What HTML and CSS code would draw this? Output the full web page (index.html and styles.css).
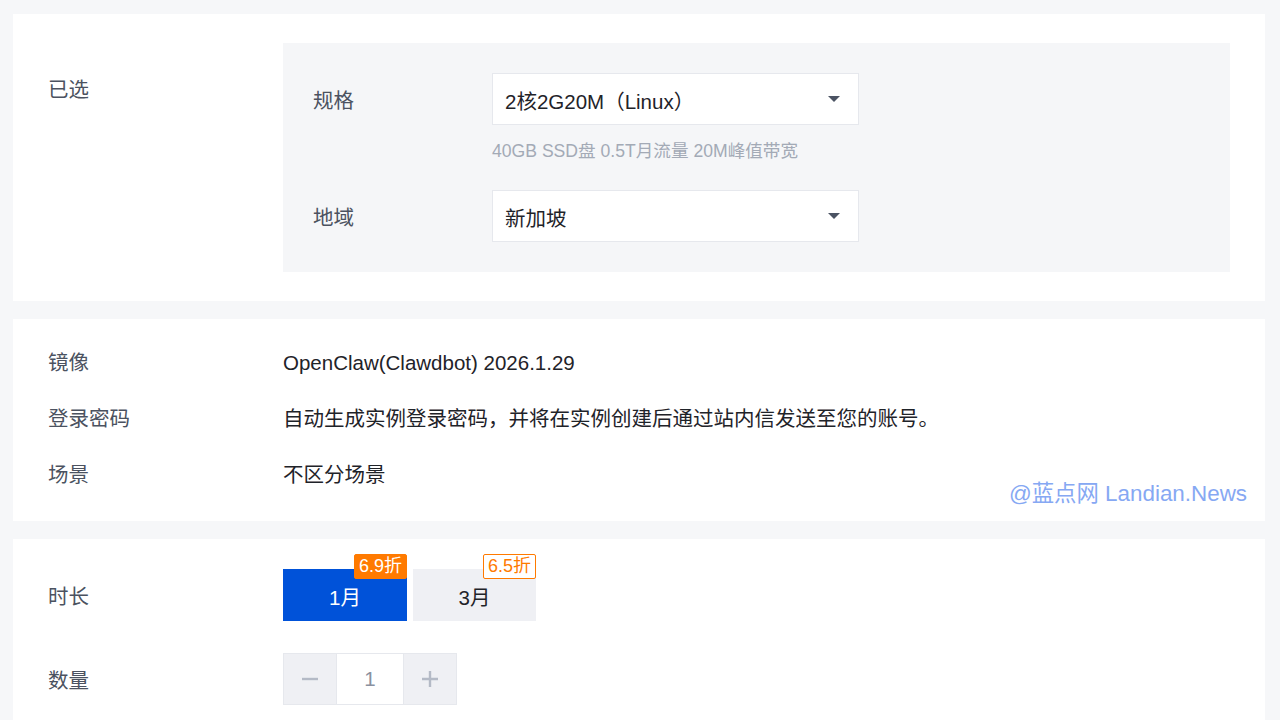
FILE: index.html
```html
<!DOCTYPE html>
<html lang="zh-CN">
<head>
<meta charset="utf-8">
<link rel="stylesheet" href="styles.css">
</head>
<body>
<div class="page">
  <section class="card card-selected">
    <div class="label label-top">已选</div>
    <div class="panel">
      <div class="prow">
        <div class="plabel">规格</div>
        <div class="pfield">
          <div class="select"><span>2核2G20M（Linux）</span><i class="caret"></i></div>
          <div class="hint">40GB SSD盘 0.5T月流量 20M峰值带宽</div>
        </div>
      </div>
      <div class="prow">
        <div class="plabel">地域</div>
        <div class="pfield">
          <div class="select"><span>新加坡</span><i class="caret"></i></div>
        </div>
      </div>
    </div>
  </section>

  <section class="card card-info">
    <div class="irow"><div class="label">镜像</div><div class="value">OpenClaw(Clawdbot) 2026.1.29</div></div>
    <div class="irow"><div class="label">登录密码</div><div class="value">自动生成实例登录密码，并将在实例创建后通过站内信发送至您的账号。</div></div>
    <div class="irow"><div class="label">场景</div><div class="value">不区分场景</div></div>
    <div class="watermark">@蓝点网 Landian.News</div>
  </section>

  <section class="card card-buy">
    <div class="brow">
      <div class="label">时长</div>
      <div class="durations">
        <div class="dur active">1月<span class="badge filled">6.9折</span></div>
        <div class="dur">3月<span class="badge outline">6.5折</span></div>
      </div>
    </div>
    <div class="brow">
      <div class="label">数量</div>
      <div class="stepper">
        <div class="step"><svg width="18" height="18" viewBox="0 0 18 18"><path d="M1 9h16" stroke="#b4bac6" stroke-width="2.4"/></svg></div>
        <div class="num">1</div>
        <div class="step"><svg width="18" height="18" viewBox="0 0 18 18"><path d="M1 9h16M9 1v16" stroke="#b4bac6" stroke-width="2.4"/></svg></div>
      </div>
    </div>
  </section>
</div>
</body>
</html>
```

FILE: styles.css
```css
* { box-sizing: border-box; }
html, body {
  margin: 0;
  padding: 0;
  background: #f6f7f9;
  font-family: "Liberation Sans", "Noto Sans CJK SC", sans-serif;
  overflow: hidden;
}
.page {
  width: 1280px;
  height: 720px;
  padding: 14px 15px 0 13px;
  display: flex;
  flex-direction: column;
  gap: 18px;
}
.card {
  background: #fff;
  padding: 0 35px;
}
.label {
  width: 235px;
  flex: none;
  font-size: 20.5px;
  line-height: 24px;
  padding-top: 3px;
  color: #4b5260;
}
.card-selected {
  display: flex;
  padding-top: 29px;
  padding-bottom: 29px;
  height: 287px;
}
.label-top { margin-top: 32px; }
.panel {
  flex: 1;
  background: #f5f6f8;
  padding: 30px 30px 30px 30px;
  display: flex;
  flex-direction: column;
  gap: 27px;
}
.prow { display: flex; }
.plabel {
  width: 179px;
  flex: none;
  font-size: 20.5px;
  line-height: 52px;
  padding-top: 2px;
  color: #4b5260;
}
.select {
  width: 367px;
  height: 52px;
  background: #fff;
  border: 1px solid #e6e8ed;
  display: flex;
  align-items: center;
  justify-content: space-between;
  padding: 2px 18px 0 12px;
  font-size: 20.5px;
  color: #1f2329;
}
.caret {
  width: 0; height: 0;
  margin-top: -2px;
  border-left: 6px solid transparent;
  border-right: 6px solid transparent;
  border-top: 6px solid #4b5363;
}
.hint {
  margin-top: 14px;
  font-size: 17.6px;
  line-height: 24px;
  color: #a3aab6;
}
.card-info {
  position: relative;
  height: 202px;
  padding-top: 32px;
  display: flex;
  flex-direction: column;
  gap: 32px;
}
.irow {
  display: flex;
  align-items: center;
  height: 24px;
}
.irow .label { padding-top: 0; }
.value {
  font-size: 20.5px;
  line-height: 24px;
  color: #1f2329;
}
.watermark {
  position: absolute;
  left: 996px;
  top: 163px;
  font-size: 22.4px;
  line-height: 24px;
  color: #86a8f3;
  white-space: nowrap;
}
.card-buy {
  flex: 1;
  padding-top: 30px;
  display: flex;
  flex-direction: column;
  gap: 32px;
}
.brow { display: flex; align-items: center; }
.durations { display: flex; gap: 6px; }
.dur {
  position: relative;
  width: 124px;
  height: 52px;
  background: #eff0f4;
  color: #1f2329;
  font-size: 20.5px;
  padding-top: 2px;
  display: flex;
  align-items: center;
  justify-content: center;
}
.dur + .dur { width: 123px; }
.dur.active { background: #0052d9; color: #fff; }
.badge {
  position: absolute;
  right: 0;
  top: -15px;
  height: 25px;
  padding: 0 4px;
  font-size: 18px;
  line-height: 23px;
  border: 1px solid #ff7a00;
  border-radius: 2px;
}
.badge.filled { background: #ff7a00; color: #fff; }
.badge.outline { background: #fff; color: #ff7a00; }
.stepper {
  display: flex;
  height: 52px;
  border: 1px solid #e6e8ed;
}
.step {
  width: 52px;
  background: #eff0f4;
  display: flex;
  align-items: center;
  justify-content: center;
}
.num {
  width: 68px;
  background: #fff;
  border-left: 1px solid #e6e8ed;
  border-right: 1px solid #e6e8ed;
  display: flex;
  align-items: center;
  justify-content: center;
  font-size: 20.5px;
  color: #8a91a0;
}
```
